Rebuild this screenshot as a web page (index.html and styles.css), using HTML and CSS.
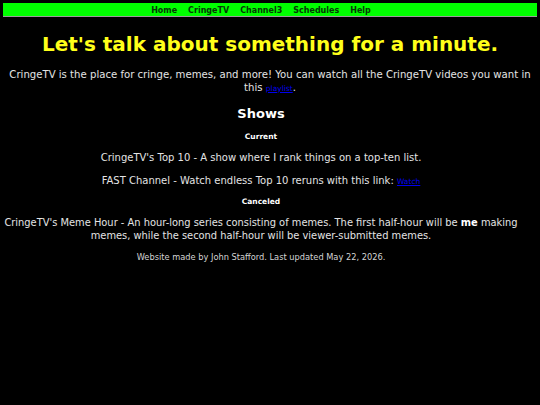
FILE: index.html
```html
<!DOCTYPE html>
<html>
<head>
<meta charset="utf-8">
<link rel="stylesheet" href="styles.css">
</head>
<body>
<nav class="nav">
  <a href="#">Home</a>
  <a href="#">CringeTV</a>
  <a href="#">Channel3</a>
  <a href="#">Schedules</a>
  <a href="#">Help</a>
</nav>
<h1 class="title">Let's talk about something for a minute.</h1>
<p class="intro">CringeTV is the place for cringe, memes, and more! You can watch all the CringeTV videos you want in this <a class="small-link" href="#">playlist</a>.</p>
<main class="content">
  <h2 class="section">Shows</h2>
  <h4 class="sub">Current</h4>
  <p class="show">CringeTV's Top 10 - A show where I rank things on a top-ten list.</p>
  <p class="show">FAST Channel - Watch endless Top 10 reruns with this link: <a class="small-link" href="#">Watch</a></p>
  <h4 class="sub">Canceled</h4>
  <p class="show meme">CringeTV's Meme Hour - An hour-long series consisting of memes. The first half-hour will be <b>me</b> making memes, while the second half-hour will be viewer-submitted memes.</p>
  <p class="footer">Website made by John Stafford. Last updated May 22, 2026.</p>
</main>
</body>
</html>
```
FILE: styles.css
```css
body {
  margin: 3px;
  background: #000;
  color: #e4e4e4;
  font-family: "DejaVu Sans", Verdana, sans-serif;
  font-size: 10px;
  text-align: center;
}
.nav {
  display: flex;
  justify-content: center;
  gap: 11px;
  background: #00ff00;
  border-bottom: 1px solid #9c9c9c;
  height: 11px;
  padding: 2px 18px 0 0;
  line-height: 11px;
}
.nav a {
  color: #063806;
  font-weight: bold;
  font-size: 8px;
  text-decoration: none;
}
.title {
  color: #ffff1a;
  font-size: 20px;
  line-height: 23px;
  margin: 16px 0 12px;
}
.intro {
  font-size: 10.15px;
  line-height: 13px;
  margin: 0 0 12px;
}
.small-link {
  color: #0000ee;
  font-size: 7.5px;
  line-height: 1;
}
.content {
  display: block;
  margin-left: -6px;
  margin-right: 12px;
}
.section {
  color: #fff;
  font-size: 13px;
  line-height: 15px;
  margin: 0 0 11px;
}
.sub {
  color: #fff;
  font-size: 7.5px;
  line-height: 9px;
  margin: 0 0 11px;
}
.show {
  line-height: 12.5px;
  margin: 0 0 10px;
}
.meme {
  font-size: 9.88px;
}
.show b {
  color: #fff;
}
.footer {
  font-size: 8.25px;
  line-height: 10px;
  color: #d4d4d4;
  margin: 0;
}
```
